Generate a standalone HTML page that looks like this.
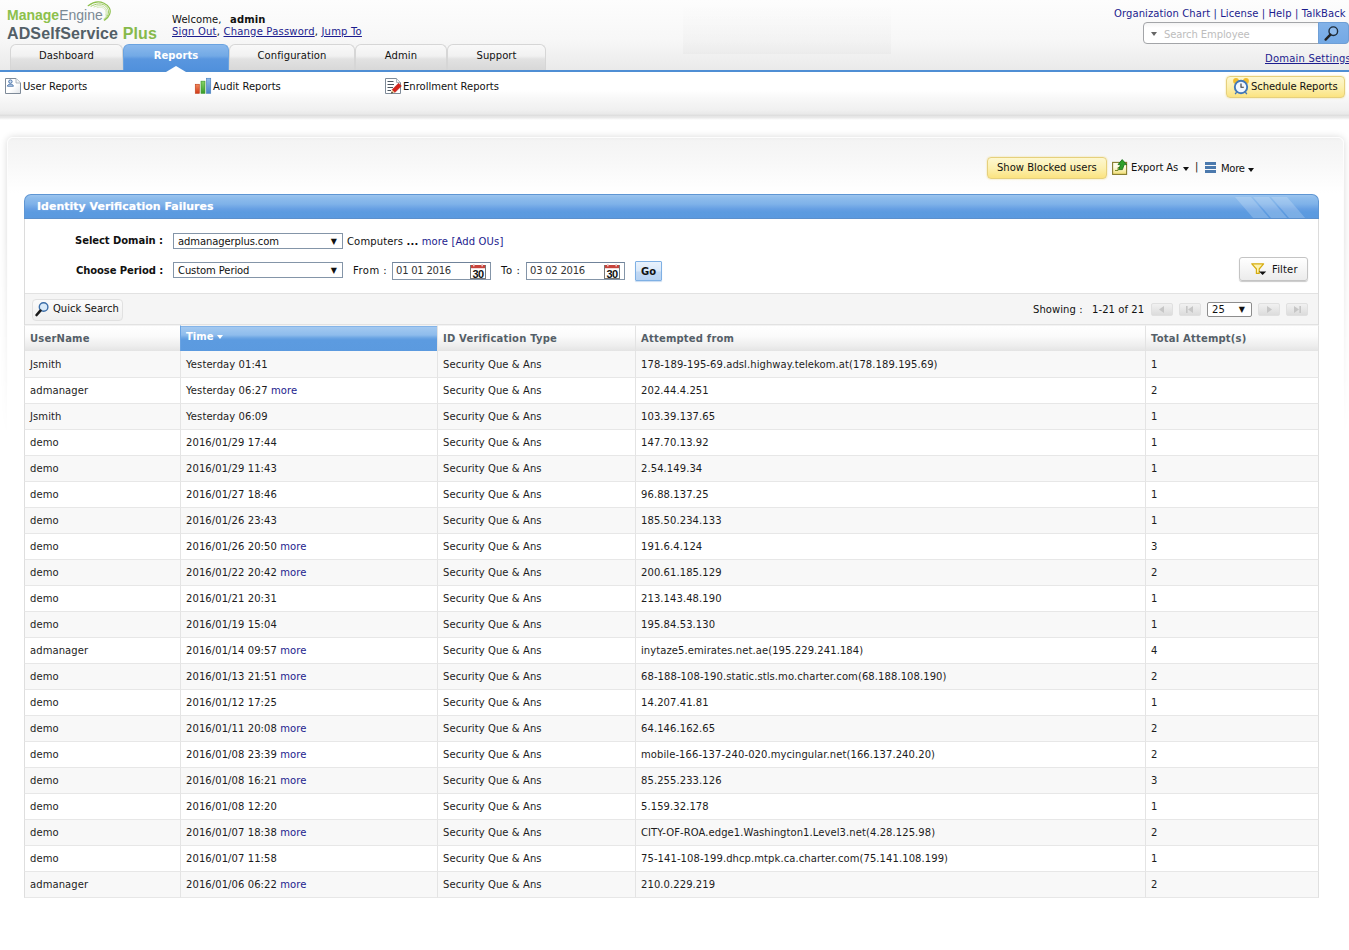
<!DOCTYPE html>
<html>
<head>
<meta charset="utf-8">
<title>ADSelfService Plus - Identity Verification Failures</title>
<style>
*{box-sizing:border-box}
html,body{margin:0;padding:0}
body{width:1349px;height:950px;overflow:hidden;position:relative;background:#fff;
 font-family:"DejaVu Sans","Liberation Sans",sans-serif;font-size:10px;letter-spacing:0.08px;color:#111;}
.abs{position:absolute;white-space:nowrap}
a{color:#1c1c8e;text-decoration:none}
a.u{text-decoration:underline}
b,.b{font-weight:bold}
#hdr{left:0;top:0;width:1349px;height:70px;background:linear-gradient(#fdfdfd 0,#f7f7f7 40px,#eaeaea 70px)}
#blueline{left:0;top:70px;width:1349px;height:2px;background:#4f8ed4}
#subnav{left:0;top:72px;width:1349px;height:48px;background:linear-gradient(#fff 0,#fff 18px,#f8f8f8 26px,#f0f0f0 38px,#e9e9e9 42px,#dddddd 43.3px,#e6e6e6 44.5px,#e9e9e9 45.5px,#fff 48px)}
.tab{top:44px;height:26px;border:1px solid #d6d6d6;border-bottom:none;border-radius:6px 6px 0 0;
 background:linear-gradient(#f9f9f9 0,#f1f1f1 11px,#e2e2e2 14px,#d7d7d7 26px);text-align:center;line-height:22px;font-size:10px;color:#111}
.tab.sel{background:linear-gradient(#8ab9ec 0,#72a9e6 11px,#5996df 14px,#5090dc 26px);border-color:#6aa3e0;color:#fff;font-weight:bold}
.tx{line-height:12px;height:12px}
/* outer container */
#outerw{left:0;top:122px;width:1349px;height:330px;overflow:hidden;
 -webkit-mask-image:linear-gradient(#000 0,#000 35%,transparent 95%);mask-image:linear-gradient(#000 0,#000 35%,transparent 95%)}
#outer{left:7px;top:15px;width:1337px;height:400px;border-radius:6px;border:1px solid #fdfdfd;
 box-shadow:0 0 7px rgba(0,0,0,.15);background:linear-gradient(#efefef 0,#f4f4f4 3px,#f7f7f7 20px,#fff 55px)}
/* panel */
#phead{left:24px;top:194px;width:1295px;height:25px;border-radius:7px 7px 0 0;overflow:hidden;
 background:linear-gradient(#9cc5ef 0,#8ebcec 3px,#7fb2e9 9px,#669fe3 14px,#5c9be0 17px,#5a99df 25px);border:1px solid #5f96d3;border-bottom:1px solid #5c90cc}
#pbody{left:24px;top:219px;width:1295px;height:679px;border-left:1px solid #dcdcdc;border-right:1px solid #dcdcdc}
#tbar{left:25px;top:293px;width:1293px;height:32px;background:#f5f5f5;border-top:1px solid #e2e2e2;border-bottom:1px solid #e2e2e2}
.slt{left:173px;width:170px;height:16px;border:1px solid #8495a8;background:#fff;line-height:15px;padding-left:4px;letter-spacing:-.1px}
.slt i{position:absolute;right:5px;top:0;font-style:normal;font-size:8px;letter-spacing:0}
.din{width:99px;height:18px;top:262px;border:1px solid #8495a8;background:#fff;line-height:16px;padding-left:3px;border-top-color:#70839a;letter-spacing:-.23px;color:#333}
.btn{border:1px solid #cfcfcf;border-radius:3px;background:linear-gradient(#fff,#ececec)}
.ybtn{border:1px solid #e6d07c;border-radius:4px;background:linear-gradient(#fdf7d0 0,#fcf0b0 50%,#fbe380 100%);box-shadow:0 0 2px #f0dc8a}
.pg{top:303px;width:22px;height:13px;border-radius:2px;background:linear-gradient(#f1f1f1,#dcdcdc);border:1px solid #e0e0e0}
/* table */
#grid{position:absolute;left:24px;top:325px;width:1295px;border-collapse:separate;border-spacing:0;table-layout:fixed;font-size:10px}
#grid th{height:26px;padding:0 0 0 5px;text-align:left;font-weight:bold;color:#555f68;letter-spacing:0.2px;
 background:linear-gradient(#fff 0,#fbfbfb 10px,#ededed 20px,#e2e2e2 26px);border-left:1px solid #e3e3e3;border-top:1px solid #f3f3f3}
#grid tr.first td{height:27px}
#grid th.srt{color:#fff;letter-spacing:0;background:linear-gradient(#75aae5 0,#a2c8f0 1.5px,#8ebcec 9px,#6aa4e3 12px,#5c9be0 14px,#5b9adf 26px);padding-bottom:4px;border-left-color:#6aa3e2}
#grid td{height:26px;padding:0 0 0 5px;border-left:1px solid #e4e4e4;border-bottom:1px solid #e7e7e7;color:#1c1c1c;white-space:nowrap;overflow:hidden}
#grid tr.odd td{background:#f8f8f8}
#grid tr.even td{background:#fff}
#grid td:last-child,#grid th:last-child{border-right:1px solid #e0e0e0}
#grid td:first-child,#grid th:first-child{border-left-color:#dedede}
a.more{color:#1c1c8e}
</style>
</head>
<body>
<div id="hdr" class="abs"></div>
<div class="abs" style="left:683px;top:3px;width:208px;height:51px;background:linear-gradient(rgba(0,0,0,0),rgba(0,0,0,.022))"></div>
<div id="blueline" class="abs"></div>
<div id="subnav" class="abs"></div>

<!-- logo -->
<div class="abs" id="logo1" style="left:7px;top:7px;font-family:'Liberation Sans',sans-serif;font-size:14px;line-height:16px;letter-spacing:0"><span style="font-weight:bold;color:#8cc04b">Manage</span><span style="color:#7b8994">Engine</span></div>
<svg class="abs" style="left:84px;top:0" width="32" height="24" viewBox="0 0 32 24"><g fill="none" stroke-linecap="round">
<path d="M4.2 5.7 C9 2 15 1 20 3.2 C25 5.5 27.5 10 25.5 14.5 C24.5 17 23 18.8 20.6 20.2" stroke="#8cc04b" stroke-width="1.2"/>
<path d="M7 6.3 C12 3.5 17 3.2 20.5 5.2 C24 7.5 25.6 11 24 14.8 C23 17 22 18.4 20.2 19.6" stroke="#9fcc66" stroke-width="1"/>
<path d="M10 7 C14 5 18 5.3 20.5 7.2 C23 9.3 23.8 12 22.8 15 C22.2 16.8 21.2 18 19.8 19" stroke="#b5d88a" stroke-width=".8"/>
<path d="M13 7.6 C16 6.6 19 7.4 20.6 9 C22.2 10.8 22.4 13 21.6 15.2" stroke="#cbe4ad" stroke-width=".7"/>
</g></svg>
<div class="abs" id="logo2" style="left:7px;top:25px;font-family:'Liberation Sans',sans-serif;font-size:16px;line-height:18px;font-weight:bold;letter-spacing:0.13px;color:#535f67">ADSelfService <span style="color:#86b94a">Plus</span></div>

<!-- welcome -->
<div class="abs tx" style="left:172px;top:14px">Welcome,&nbsp; <b style="letter-spacing:.1px;margin-left:2px">admin</b></div>
<div class="abs tx" style="left:172px;top:26px;letter-spacing:.2px"><a class="u">Sign Out</a>, <a class="u">Change Password</a>, <a class="u">Jump To</a></div>

<!-- top right links -->
<div class="abs tx" style="left:1114px;top:8px;letter-spacing:.087px;color:#1c1c8e"><a>Organization Chart</a> | <a>License</a> | <a>Help</a> | <a>TalkBack</a></div>
<div class="abs" style="left:1143px;top:22px;width:206px;height:22px;border:1px solid #a3a5a8;border-radius:4px;background:linear-gradient(#f4f4f4 0,#fff 5px)"></div>
<div class="abs" style="left:1318px;top:22px;width:31px;height:22px;background:linear-gradient(#82b2e8,#74a9e5);border:1px solid #6f9fd6;border-radius:0 4px 4px 0"></div>
<svg class="abs" style="left:1323px;top:25px" width="18" height="17" viewBox="0 0 18 17"><circle cx="10.3" cy="6.2" r="4.3" fill="#8ebaec" stroke="#1d2b3a" stroke-width="1.4"/><path d="M7.4 9.6 L2.6 14.6" stroke="#222" stroke-width="2.4" stroke-linecap="round"/></svg>
<div class="abs" style="left:1151px;top:32px;width:0;height:0;border-left:3px solid transparent;border-right:3px solid transparent;border-top:4px solid #666"></div>
<div class="abs tx" style="left:1164px;top:29px;color:#bdbdbd;letter-spacing:-.1px">Search Employee</div>
<div class="abs tx" style="left:1265px;top:53px;letter-spacing:.2px"><a class="u">Domain Settings</a></div>

<!-- tabs -->
<div class="abs tab" style="left:10px;width:113px">Dashboard</div>
<div class="abs tab sel" style="left:123px;width:106px">Reports</div>
<div class="abs tab" style="left:229px;width:126px">Configuration</div>
<div class="abs tab" style="left:355px;width:92px">Admin</div>
<div class="abs tab" style="left:447px;width:99px">Support</div>
<div class="abs" style="left:166px;top:66px;width:0;height:0;border-left:10px solid transparent;border-right:10px solid transparent;border-bottom:6px solid #fff"></div>

<!-- subnav items -->
<svg class="abs" style="left:5px;top:78px" width="17" height="17" viewBox="0 0 17 17"><defs><linearGradient id="dg" x1="0" y1="0" x2="1" y2="1"><stop offset=".55" stop-color="#fff"/><stop offset="1" stop-color="#dfe3e8"/></linearGradient></defs><path d="M.5 .5 H11 L15.5 5 V15.5 H.5 Z" fill="url(#dg)" stroke="#7e8a98"/><path d="M11 .5 V5 H15.5" fill="#f4f6f8" stroke="#9aa4af" stroke-width=".8"/><circle cx="5.4" cy="3.6" r="1.7" fill="#cfe0f4" stroke="#3c68a0" stroke-width=".9"/><path d="M2.4 8.2 C2.4 5.6 8.4 5.6 8.4 8.2 Z" fill="#cfe0f4" stroke="#3c68a0" stroke-width=".9"/></svg>
<div class="abs tx" style="left:23px;top:81px;letter-spacing:0">User Reports</div>
<svg class="abs" style="left:194px;top:77px" width="18" height="18" viewBox="0 0 18 18"><defs><linearGradient id="gr" x1="0" y1="0" x2="0" y2="1"><stop offset="0" stop-color="#f28a5c"/><stop offset="1" stop-color="#d23a1a"/></linearGradient><linearGradient id="gg" x1="0" y1="0" x2="0" y2="1"><stop offset="0" stop-color="#86d466"/><stop offset="1" stop-color="#379a2b"/></linearGradient><linearGradient id="gb" x1="0" y1="0" x2="0" y2="1"><stop offset="0" stop-color="#93bdea"/><stop offset="1" stop-color="#4a84c8"/></linearGradient></defs><rect x="1.3" y="7.3" width="4" height="9" fill="url(#gr)" stroke="#c2451f" stroke-width=".7"/><rect x="7" y="4.2" width="4" height="12.1" fill="url(#gg)" stroke="#3f9a30" stroke-width=".7"/><rect x="12.5" y="1.3" width="4.2" height="15" fill="url(#gb)" stroke="#4f83c0" stroke-width=".7"/></svg>
<div class="abs tx" style="left:213px;top:81px;letter-spacing:0">Audit Reports</div>
<svg class="abs" style="left:385px;top:78px" width="18" height="17" viewBox="0 0 18 17"><path d="M.5 .5 H11.5 L15.5 4.5 V15.5 H.5 Z" fill="#fff" stroke="#7e8a98"/><path d="M11.5 .5 V4.5 H15.5" fill="#f1f3f5" stroke="#9aa4af" stroke-width=".8"/><path d="M2.5 3.5H8.5M2.5 6.5H9M2.5 9.5H8M2.5 12.5H6" stroke="#4a5560" stroke-width="1"/><path d="M13.6 5.2 L16.4 8 L9.8 14.6 L7 11.8 Z" fill="#d5241c" stroke="#a31510" stroke-width=".5"/><path d="M7 11.8 L9.8 14.6 L6.2 15.5 Z" fill="#e8c48a"/><path d="M6.2 15.5 L6.7 13.6 L8 14.9 Z" fill="#111"/></svg>
<div class="abs tx" style="left:403px;top:81px;letter-spacing:0">Enrollment Reports</div>

<div class="abs ybtn" style="left:1226px;top:76px;width:119px;height:22px"></div>
<svg class="abs" style="left:1232px;top:77px" width="18" height="19" viewBox="0 0 18 19"><circle cx="4" cy="4" r="2.9" fill="#f2bd2c"/><circle cx="14" cy="4" r="2.9" fill="#f2bd2c"/><circle cx="9" cy="10" r="6.2" fill="#f1f7ff" stroke="#4177b8" stroke-width="1.9"/><path d="M9 6.4 V10.2 H11.8" stroke="#333" stroke-width="1.1" fill="none"/><path d="M4.6 15.2 L3.2 17.2 M13.4 15.2 L14.8 17.2" stroke="#4177b8" stroke-width="1.4"/></svg>
<div class="abs tx" style="left:1251px;top:81px;letter-spacing:-.06px">Schedule Reports</div>

<!-- outer container -->
<div id="outerw" class="abs"><div id="outer" class="abs"></div></div>

<!-- toolbar -->
<div class="abs ybtn" style="left:987px;top:157px;width:120px;height:22px"></div>
<div class="abs tx" style="left:997px;top:162px;letter-spacing:.01px">Show Blocked users</div>
<svg class="abs" style="left:1112px;top:159px" width="17" height="17" viewBox="0 0 17 17"><defs><linearGradient id="ex" x1="0" y1="0" x2="0" y2="1"><stop offset=".4" stop-color="#fffce6"/><stop offset="1" stop-color="#f1de6e"/></linearGradient></defs><rect x=".6" y="3.4" width="14" height="12" fill="url(#ex)" stroke="#857a2e" stroke-width="1.1"/><path d="M3 11.5 H6 V8.5 H8" stroke="#7d8a2a" fill="none" stroke-width="1"/><path d="M10.2 .6 L14.6 5.6 H12.2 L10.4 10.6 H6.6 L8.6 5.6 H6 Z" fill="#2fa02b" stroke="#136b12" stroke-width=".8" stroke-linejoin="round"/></svg>
<div class="abs tx" style="left:1131px;top:162px;letter-spacing:-.08px">Export As</div>
<div class="abs" style="left:1183px;top:167px;width:0;height:0;border-left:3px solid transparent;border-right:3px solid transparent;border-top:4px solid #111"></div>
<div class="abs tx" style="left:1195px;top:161px">|</div>
<div class="abs" style="left:1205px;top:162px;width:11px;height:11px;background:linear-gradient(#4b79ad 0,#4b79ad 3px,transparent 3px,transparent 4px,#4b79ad 4px,#4b79ad 7px,transparent 7px,transparent 8px,#4b79ad 8px,#4b79ad 11px)"></div>
<div class="abs tx" style="left:1221px;top:163px;letter-spacing:-.3px">More</div>
<div class="abs" style="left:1248px;top:168px;width:0;height:0;border-left:3px solid transparent;border-right:3px solid transparent;border-top:4px solid #111"></div>

<!-- panel -->
<div id="phead" class="abs">
 <svg class="abs" style="left:1200px;top:0" width="95" height="25" viewBox="0 0 95 25"><g fill="#fff" fill-opacity=".2"><path d="M10 2 H26 L45 24 H29 Z"/><path d="M28 2 H44 L63 24 H47 Z"/><path d="M46 2 H62 L81 24 H65 Z"/></g></svg>
</div>
<div class="abs" style="left:37px;top:200px;font-size:11px;line-height:14px;font-weight:bold;color:#fff;letter-spacing:0;text-shadow:0 0 1px rgba(255,255,255,.5)">Identity Verification Failures</div>
<div id="pbody" class="abs"></div>

<!-- filter rows -->
<div class="abs tx b" style="left:75px;top:235px;letter-spacing:-.05px">Select Domain :</div>
<div class="abs slt" style="top:233px">admanagerplus.com<i>&#9660;</i></div>
<div class="abs tx" style="left:347px;top:236px;letter-spacing:.14px">Computers <b>...</b> <a>more</a> <a>[Add OUs]</a></div>
<div class="abs tx b" style="left:76px;top:265px;letter-spacing:-.09px">Choose Period :</div>
<div class="abs slt" style="top:262px">Custom Period<i>&#9660;</i></div>
<div class="abs tx" style="left:353px;top:265px;letter-spacing:.45px">From :</div>
<div class="abs din" style="left:392px">01 01 2016</div>
<div class="abs tx" style="left:501px;top:265px;letter-spacing:.6px">To :</div>
<div class="abs din" style="left:526px">03 02 2016</div>
<svg class="abs cal" style="left:470px;top:264px" width="16" height="15" viewBox="0 0 16 15"><rect x=".5" y="1.5" width="15" height="13" fill="#fff" stroke="#777"/><rect x="1" y="1" width="14" height="3.2" fill="#c7443c"/><rect x="3" y="0" width="1.6" height="2.4" fill="#e9c9c6"/><rect x="11.4" y="0" width="1.6" height="2.4" fill="#e9c9c6"/><text x="8" y="13.6" text-anchor="middle" font-family="Liberation Sans, sans-serif" font-weight="bold" font-size="11" fill="#111" letter-spacing="-0.5">30</text></svg>
<svg class="abs cal" style="left:604px;top:264px" width="16" height="15" viewBox="0 0 16 15"><rect x=".5" y="1.5" width="15" height="13" fill="#fff" stroke="#777"/><rect x="1" y="1" width="14" height="3.2" fill="#c7443c"/><rect x="3" y="0" width="1.6" height="2.4" fill="#e9c9c6"/><rect x="11.4" y="0" width="1.6" height="2.4" fill="#e9c9c6"/><text x="8" y="13.6" text-anchor="middle" font-family="Liberation Sans, sans-serif" font-weight="bold" font-size="11" fill="#111" letter-spacing="-0.5">30</text></svg>
<div class="abs" style="left:635px;top:261px;width:27px;height:20px;border:1px solid #7fb0e4;border-radius:1px;background:linear-gradient(#e9f2fc 0,#d9e8f9 50%,#c2d9f4 55%,#b6d2f2 100%);box-shadow:0 1px 1px #c9dcf2"></div>
<div class="abs tx b" style="left:641px;top:266px">Go</div>

<div class="abs btn" style="left:1239px;top:257px;width:69px;height:24px;border-color:#c4c4c4;box-shadow:0 1px 1px #c9c9c9"></div>
<svg class="abs" style="left:1251px;top:263px" width="18" height="14" viewBox="0 0 18 14"><path d="M.8 .8 H12.6 L8.2 6 V10.4 H5.4 V6 Z" fill="#fdf3b0" stroke="#d6ac10" stroke-width="1.2" stroke-linejoin="round"/><path d="M8 8.4 H15.2 L11.6 12 Z" fill="#111"/></svg>
<div class="abs tx" style="left:1272px;top:264px;letter-spacing:.15px">Filter</div>

<!-- table toolbar -->
<div id="tbar" class="abs"></div>
<div class="abs" style="left:32px;top:299px;width:91px;height:22px;border:1px solid #e1e1e1;border-radius:4px;background:linear-gradient(#fbfbfb,#efefef)"></div>
<svg class="abs" style="left:35px;top:301px" width="15" height="16" viewBox="0 0 15 16"><circle cx="8.6" cy="6" r="4.3" fill="#d9eaf9" stroke="#3c6ea8" stroke-width="1.4"/><path d="M5.4 9.6 L1.6 14" stroke="#1a1a1a" stroke-width="2.6" stroke-linecap="round"/></svg>
<div class="abs tx" style="left:53px;top:303px;letter-spacing:0">Quick Search</div>

<div class="abs tx" style="left:1033px;top:304px;letter-spacing:.07px">Showing :</div>
<div class="abs tx" style="left:1092px;top:304px;letter-spacing:.08px">1-21 of 21</div>
<div class="abs pg" style="left:1151px"></div>
<div class="abs pg" style="left:1179px"></div>
<div class="abs" style="left:1207px;top:302px;width:45px;height:15px;border:1px solid #8d8d8d;border-radius:2px;background:#fff;line-height:14px;padding-left:4px">25<span style="position:absolute;right:6px;top:0;font-size:8px">&#9660;</span></div>
<div class="abs pg" style="left:1258px"></div>
<div class="abs pg" style="left:1286px"></div>
<svg class="abs" style="left:1151px;top:303px" width="160" height="13" viewBox="0 0 160 13"><g fill="#c6c6c6"><path d="M13 3 V10 L8 6.5 Z"/><path d="M42 3 V10 L37 6.5 Z"/><rect x="35" y="3" width="1.6" height="7"/><path d="M116 3 V10 L121 6.5 Z"/><path d="M143 3 V10 L148 6.5 Z"/><rect x="148.4" y="3" width="1.6" height="7"/></g></svg>

<!-- grid -->
<table id="grid">
<colgroup><col style="width:156px"><col style="width:257px"><col style="width:198px"><col style="width:510px"><col style="width:174px"></colgroup>
<tr><th>UserName</th><th class="srt">Time<span style="display:inline-block;margin-left:4px;width:0;height:0;border-left:3.5px solid transparent;border-right:3.5px solid transparent;border-top:4.5px solid #fff;vertical-align:1px"></span></th><th>ID Verification Type</th><th>Attempted from</th><th>Total Attempt(s)</th></tr>
<tr class="odd first"><td>Jsmith</td><td>Yesterday 01:41</td><td>Security Que &amp; Ans</td><td>178-189-195-69.adsl.highway.telekom.at(178.189.195.69)</td><td>1</td></tr>
<tr class="even"><td>admanager</td><td>Yesterday 06:27 <a class="more">more</a></td><td>Security Que &amp; Ans</td><td>202.44.4.251</td><td>2</td></tr>
<tr class="odd"><td>Jsmith</td><td>Yesterday 06:09</td><td>Security Que &amp; Ans</td><td>103.39.137.65</td><td>1</td></tr>
<tr class="even"><td>demo</td><td>2016/01/29 17:44</td><td>Security Que &amp; Ans</td><td>147.70.13.92</td><td>1</td></tr>
<tr class="odd"><td>demo</td><td>2016/01/29 11:43</td><td>Security Que &amp; Ans</td><td>2.54.149.34</td><td>1</td></tr>
<tr class="even"><td>demo</td><td>2016/01/27 18:46</td><td>Security Que &amp; Ans</td><td>96.88.137.25</td><td>1</td></tr>
<tr class="odd"><td>demo</td><td>2016/01/26 23:43</td><td>Security Que &amp; Ans</td><td>185.50.234.133</td><td>1</td></tr>
<tr class="even"><td>demo</td><td>2016/01/26 20:50 <a class="more">more</a></td><td>Security Que &amp; Ans</td><td>191.6.4.124</td><td>3</td></tr>
<tr class="odd"><td>demo</td><td>2016/01/22 20:42 <a class="more">more</a></td><td>Security Que &amp; Ans</td><td>200.61.185.129</td><td>2</td></tr>
<tr class="even"><td>demo</td><td>2016/01/21 20:31</td><td>Security Que &amp; Ans</td><td>213.143.48.190</td><td>1</td></tr>
<tr class="odd"><td>demo</td><td>2016/01/19 15:04</td><td>Security Que &amp; Ans</td><td>195.84.53.130</td><td>1</td></tr>
<tr class="even"><td>admanager</td><td>2016/01/14 09:57 <a class="more">more</a></td><td>Security Que &amp; Ans</td><td>inytaze5.emirates.net.ae(195.229.241.184)</td><td>4</td></tr>
<tr class="odd"><td>demo</td><td>2016/01/13 21:51 <a class="more">more</a></td><td>Security Que &amp; Ans</td><td>68-188-108-190.static.stls.mo.charter.com(68.188.108.190)</td><td>2</td></tr>
<tr class="even"><td>demo</td><td>2016/01/12 17:25</td><td>Security Que &amp; Ans</td><td>14.207.41.81</td><td>1</td></tr>
<tr class="odd"><td>demo</td><td>2016/01/11 20:08 <a class="more">more</a></td><td>Security Que &amp; Ans</td><td>64.146.162.65</td><td>2</td></tr>
<tr class="even"><td>demo</td><td>2016/01/08 23:39 <a class="more">more</a></td><td>Security Que &amp; Ans</td><td>mobile-166-137-240-020.mycingular.net(166.137.240.20)</td><td>2</td></tr>
<tr class="odd"><td>demo</td><td>2016/01/08 16:21 <a class="more">more</a></td><td>Security Que &amp; Ans</td><td>85.255.233.126</td><td>3</td></tr>
<tr class="even"><td>demo</td><td>2016/01/08 12:20</td><td>Security Que &amp; Ans</td><td>5.159.32.178</td><td>1</td></tr>
<tr class="odd"><td>demo</td><td>2016/01/07 18:38 <a class="more">more</a></td><td>Security Que &amp; Ans</td><td>CITY-OF-ROA.edge1.Washington1.Level3.net(4.28.125.98)</td><td>2</td></tr>
<tr class="even"><td>demo</td><td>2016/01/07 11:58</td><td>Security Que &amp; Ans</td><td>75-141-108-199.dhcp.mtpk.ca.charter.com(75.141.108.199)</td><td>1</td></tr>
<tr class="odd"><td>admanager</td><td>2016/01/06 06:22 <a class="more">more</a></td><td>Security Que &amp; Ans</td><td>210.0.229.219</td><td>2</td></tr>
</table>
</body>
</html>
